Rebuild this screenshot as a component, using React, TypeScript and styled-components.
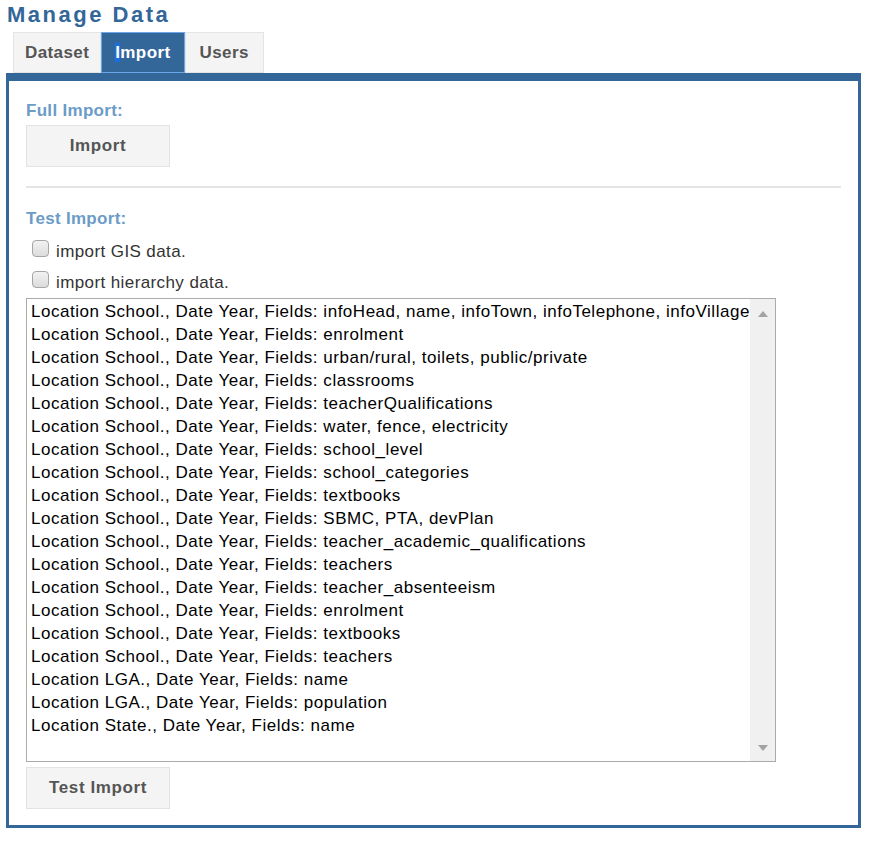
import React from "react";
import styled, { createGlobalStyle } from "styled-components";

const Global = createGlobalStyle`
  html, body { margin: 0; padding: 0; background: #fff; }
  body { font-family: "Liberation Sans", Arial, sans-serif; }
`;

const Page = styled.div`
  padding: 0 20px 0 6px;
  width: 855px;
`;

const Title = styled.h1`
  margin: 0;
  padding-left: 1px;
  font-size: 22px;
  line-height: 30px;
  font-weight: bold;
  letter-spacing: 2.5px;
  color: #336699;
`;

const TabBar = styled.div`
  display: flex;
  margin-top: 2px;
  padding-left: 7px;
`;

const Tab = styled.div<{ $active?: boolean; $pad?: number }>`
  box-sizing: border-box;
  height: 41px;
  padding: 0 ${(p) => p.$pad ?? 12}px;
  display: flex;
  align-items: center;
  font-size: 17px;
  letter-spacing: 0.4px;
  font-weight: bold;
  border: 1px solid ${(p) => (p.$active ? "#6aa5e8" : "#e4e4e4")};
  background: ${(p) => (p.$active ? "#336699" : "#f4f4f4")};
  color: ${(p) => (p.$active ? "#fff" : "#555")};
`;

const Caret = styled.span`
  background: #1a6fe0;
`;

const Panel = styled.div`
  box-sizing: border-box;
  border: 3px solid #336699;
  border-top-width: 8px;
  padding: 20px 17px 17px 17px;
  height: 755px;
`;

const SectionLabel = styled.div`
  font-size: 17px;
  letter-spacing: 0.3px;
  line-height: 20px;
  font-weight: bold;
  color: #6b9cc7;
`;

const Button = styled.button<{ $mt?: number }>`
  display: block;
  box-sizing: border-box;
  width: 144px;
  height: 42px;
  margin-top: ${(p) => p.$mt ?? 4}px;
  background: #f4f4f4;
  border: 1px solid #e3e3e3;
  color: #555;
  font-family: "Liberation Sans", Arial, sans-serif;
  font-size: 17px;
  letter-spacing: 0.6px;
  font-weight: bold;
  padding: 0;
`;

const Rule = styled.hr`
  margin: 19px 0 21px 0;
  border: 0;
  height: 2px;
  background: #e4e4e4;
`;

const CheckList = styled.div`
  padding-top: 7px;
`;

const CheckRow = styled.label`
  display: flex;
  align-items: center;
  height: 31px;
  padding-left: 6px;
  gap: 7px;
  font-size: 17px;
  letter-spacing: 0.4px;
  color: #333;
`;

const Box = styled.span`
  box-sizing: border-box;
  width: 17px;
  height: 17px;
  border: 1px solid #a6a6a6;
  border-radius: 4px;
  background: linear-gradient(#f2f2f2, #dcdcdc);
  margin-top: -6px;
`;

const ListBox = styled.div`
  box-sizing: border-box;
  width: 750px;
  height: 464px;
  border: 1px solid #ababab;
  display: flex;
`;

const Options = styled.div`
  flex: 1;
  padding: 1px 0 0 4px;
  overflow: hidden;
`;

const Option = styled.div`
  font-size: 17px;
  letter-spacing: 0.52px;
  line-height: 23px;
  color: #000;
  white-space: nowrap;
`;

const ScrollTrack = styled.div`
  width: 25px;
  flex: none;
  background: #f0f0f0;
  display: flex;
  flex-direction: column;
  justify-content: space-between;
  align-items: center;
  padding: 12px 0 10px;
`;

const Arrow = styled.span<{ $down?: boolean }>`
  width: 0;
  height: 0;
  border-left: 5px solid transparent;
  border-right: 5px solid transparent;
  ${(p) =>
    p.$down
      ? "border-top: 6px solid #a3a3a3;"
      : "border-bottom: 6px solid #a3a3a3;"}
`;

const rows = [
  "Location School., Date Year, Fields: infoHead, name, infoTown, infoTelephone, infoVillage",
  "Location School., Date Year, Fields: enrolment",
  "Location School., Date Year, Fields: urban/rural, toilets, public/private",
  "Location School., Date Year, Fields: classrooms",
  "Location School., Date Year, Fields: teacherQualifications",
  "Location School., Date Year, Fields: water, fence, electricity",
  "Location School., Date Year, Fields: school_level",
  "Location School., Date Year, Fields: school_categories",
  "Location School., Date Year, Fields: textbooks",
  "Location School., Date Year, Fields: SBMC, PTA, devPlan",
  "Location School., Date Year, Fields: teacher_academic_qualifications",
  "Location School., Date Year, Fields: teachers",
  "Location School., Date Year, Fields: teacher_absenteeism",
  "Location School., Date Year, Fields: enrolment",
  "Location School., Date Year, Fields: textbooks",
  "Location School., Date Year, Fields: teachers",
  "Location LGA., Date Year, Fields: name",
  "Location LGA., Date Year, Fields: population",
  "Location State., Date Year, Fields: name",
];

export default function App() {
  return (
    <>
      <Global />
      <Page>
        <Title>Manage Data</Title>
        <TabBar>
          <Tab $pad={11}>Dataset</Tab>
          <Tab $active $pad={13}>
            <span>
              <Caret>I</Caret>mport
            </span>
          </Tab>
          <Tab $pad={14}>Users</Tab>
        </TabBar>
        <Panel>
          <SectionLabel>Full Import:</SectionLabel>
          <Button>Import</Button>
          <Rule />
          <SectionLabel>Test Import:</SectionLabel>
          <CheckList>
            <CheckRow>
              <Box />
              import GIS data.
            </CheckRow>
            <CheckRow>
              <Box />
              import hierarchy data.
            </CheckRow>
          </CheckList>
          <ListBox>
            <Options>
              {rows.map((r, i) => (
                <Option key={i}>{r}</Option>
              ))}
            </Options>
            <ScrollTrack>
              <Arrow />
              <Arrow $down />
            </ScrollTrack>
          </ListBox>
          <Button $mt={5}>Test Import</Button>
        </Panel>
      </Page>
    </>
  );
}
